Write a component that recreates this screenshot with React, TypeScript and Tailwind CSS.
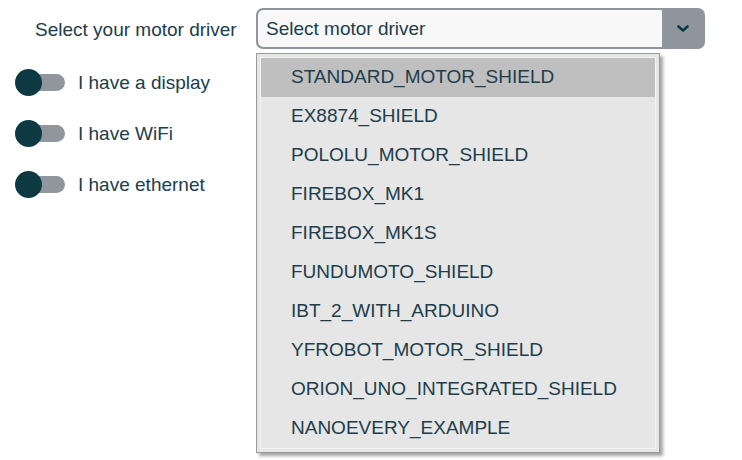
const DRIVERS = [
  'STANDARD_MOTOR_SHIELD',
  'EX8874_SHIELD',
  'POLOLU_MOTOR_SHIELD',
  'FIREBOX_MK1',
  'FIREBOX_MK1S',
  'FUNDUMOTO_SHIELD',
  'IBT_2_WITH_ARDUINO',
  'YFROBOT_MOTOR_SHIELD',
  'ORION_UNO_INTEGRATED_SHIELD',
  'NANOEVERY_EXAMPLE',
]

const TOGGLES = ['I have a display', 'I have WiFi', 'I have ethernet']

function Toggle({ label }: { label: string }) {
  return (
    <div className="flex items-center h-[27px]">
      <div className="relative w-[50px] h-[27px] flex-shrink-0">
        <div className="absolute left-[5px] top-[5px] w-[45px] h-[17px] rounded-full bg-[#8f969c]" />
        <div className="absolute left-0 top-0 w-[27px] h-[27px] rounded-full bg-[#0d3a42]" />
      </div>
      <span className="ml-[13px] text-[19px] leading-none text-[#203d4b]">{label}</span>
    </div>
  )
}

export default function App() {
  return (
    <div
      className="relative w-[742px] h-[460px] bg-white pt-[8px]"
      style={{ fontFamily: '"Liberation Sans", Arial, sans-serif' }}
    >
      <div className="flex items-center">
        <label className="w-[256px] pl-[35px] pt-[3px] text-[19px] text-[#203d4b]">Select your motor driver</label>
        <div className="flex w-[449px] h-[41px] rounded-[7px] border-2 border-[#8f959c] bg-[#8f959c] overflow-hidden">
          <div className="flex-1 flex items-center bg-[#f8f8f8] rounded-l-[5px] pl-[8px] pt-[2px] text-[19px] text-[#203d4b]">
            Select motor driver
          </div>
          <div className="w-[41px] flex items-center justify-center">
            <svg width="12" height="8" viewBox="0 0 12 8">
              <path d="M1.5 1.5 L6 5.5 L10.5 1.5" fill="none" stroke="#0d3a42" strokeWidth="2.6" strokeLinecap="round" strokeLinejoin="round" />
            </svg>
          </div>
        </div>
      </div>

      <div className="flex flex-col gap-[24px] pl-[15px] mt-[20px]">
        {TOGGLES.map((t) => (
          <Toggle key={t} label={t} />
        ))}
      </div>

      <div className="absolute left-[256px] top-[53px] w-[404px] border border-[#9a9a9a] bg-[#e6e6e6] p-[3px] shadow-[3px_3px_3px_rgba(0,0,0,0.35)]">
        <div className="border border-[#f4f4f4]">
          {DRIVERS.map((d, i) => (
            <div
              key={d}
              className={`h-[39px] flex items-center pl-[30px] text-[19px] text-[#203d4b] ${i === 0 ? 'bg-[#bfbfbf]' : ''}`}
            >
              {d}
            </div>
          ))}
        </div>
      </div>
    </div>
  )
}
